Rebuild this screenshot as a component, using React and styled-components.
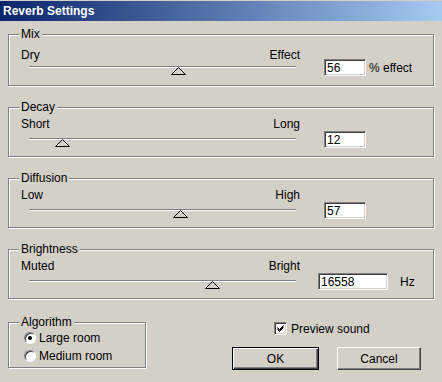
import React from 'react';
import styled, { createGlobalStyle, css } from 'styled-components';

const GlobalStyle = createGlobalStyle`
  body {
    margin: 0;
    background: #d4d0c8;
  }
`;

const groups = [
  { title: 'Mix', left: 'Dry', right: 'Effect', value: '56', pos: 55.8, unit: '% effect', unitGap: 3, padTop: 13, trackGap: 4, padBottom: 9 },
  { title: 'Decay', left: 'Short', right: 'Long', value: '12', pos: 12.4 },
  { title: 'Diffusion', left: 'Low', right: 'High', value: '57', pos: 56.4 },
  { title: 'Brightness', left: 'Muted', right: 'Bright', value: '16558', pos: 68.4, unit: 'Hz', unitGap: 12, inputGap: 18, inputWidth: 70 },
];

const App = () => {
  return (
    <>
      <GlobalStyle />
      <Dialog>
        <TitleBar>Reverb Settings</TitleBar>
        <Body>
          {groups.map(g => (
            <Group
              key={g.title}
              $padTop={g.padTop ?? 9}
              $padBottom={g.padBottom ?? 8}
            >
              <Legend>{g.title}</Legend>
              <SliderCol>
                <Labels>
                  <span>{g.left}</span>
                  <span>{g.right}</span>
                </Labels>
                <Track $gap={g.trackGap ?? 7}>
                  <Thumb style={{ left: `calc(${g.pos}% - 7px)` }} width="15" height="8" viewBox="0 0 15 8">
                    <polygon points="7.5,0.5 0.5,7.5 14.5,7.5" fill="#d4d0c8" stroke="#000" strokeWidth="1" />
                  </Thumb>
                </Track>
              </SliderCol>
              <Field $gap={g.inputGap ?? 24}>
                <TextBox $w={g.inputWidth ?? 42} defaultValue={g.value} />
                {g.unit && <Unit $gap={g.unitGap}>{g.unit}</Unit>}
              </Field>
            </Group>
          ))}
          <Footer>
            <AlgoGroup>
              <Legend>Algorithm</Legend>
              <RadioRow>
                <Radio $checked />
                Large room
              </RadioRow>
              <RadioRow>
                <Radio />
                Medium room
              </RadioRow>
            </AlgoGroup>
            <Actions>
              <CheckRow>
                <CheckBox>
                  <svg width="7" height="7" viewBox="0 0 7 7">
                    <path d="M0.5 2.5 L2.5 4.5 L6.5 0.5 M0.5 3.5 L2.5 5.5 L6.5 1.5 M0.5 4.5 L2.5 6.5 L6.5 2.5" stroke="#000" strokeWidth="1" fill="none" />
                  </svg>
                </CheckBox>
                Preview sound
              </CheckRow>
              <Buttons>
                <Button $w={87} $default>OK</Button>
                <Button $w={84}>Cancel</Button>
              </Buttons>
            </Actions>
          </Footer>
        </Body>
      </Dialog>
    </>
  );
};

export default App;

const Dialog = styled.div`
  width: 442px;
  height: 382px;
  box-sizing: border-box;
  padding-top: 1px;
  overflow: hidden;
  background: #d4d0c8;
  color: #000;
  font-family: "Liberation Sans", Arial, sans-serif;
  font-size: 12px;
`;

const TitleBar = styled.div`
  height: 20px;
  display: flex;
  align-items: center;
  padding-left: 3px;
  background: linear-gradient(to right, #0a246a, #a6caf0);
  color: #fff;
  font-weight: bold;
  font-size: 12px;
`;

const Body = styled.div`
  display: flex;
  flex-direction: column;
  gap: 21px;
  padding: 13px 8px 0 8px;
`;

const etched = css`
  position: relative;
  box-sizing: border-box;
  border: 1px solid #808080;
  box-shadow: 1px 1px 0 #fff, inset 1px 1px 0 #fff;
`;

const Group = styled.div`
  ${etched}
  width: 426px;
  display: flex;
  align-items: flex-end;
  padding: ${p => p.$padTop}px 0 ${p => p.$padBottom}px 12px;
`;

const Legend = styled.span`
  position: absolute;
  top: -8px;
  left: 10px;
  padding: 0 2px;
  line-height: 14px;
  background: #d4d0c8;
`;

const SliderCol = styled.div`
  width: 279px;
  display: flex;
  flex-direction: column;
`;

const Labels = styled.div`
  display: flex;
  justify-content: space-between;
  height: 14px;
  line-height: 14px;
`;

const Track = styled.div`
  position: relative;
  height: 10px;
  margin: ${p => p.$gap}px 4px 0 8px;
  box-sizing: border-box;
  border-top: 1px solid #808080;

  &::before {
    content: '';
    position: absolute;
    left: 0;
    right: 0;
    top: 0;
    height: 1px;
    background: #fff;
  }
`;

const Thumb = styled.svg`
  position: absolute;
  top: 0;
  display: block;
`;

const Field = styled.div`
  display: flex;
  align-items: center;
  margin-left: ${p => p.$gap}px;
`;

const sunken = css`
  border: 1px solid;
  border-color: #808080 #fff #fff #808080;
  box-shadow: inset 1px 1px 0 #404040, inset -1px -1px 0 #d4d0c8;
`;

const TextBox = styled.input`
  ${sunken}
  width: ${p => p.$w}px;
  height: 17px;
  box-sizing: border-box;
  padding: 0 0 0 2px;
  margin: 0;
  background: #fff;
  font-family: "Liberation Sans", Arial, sans-serif;
  font-size: 12px;
  color: #000;
  outline: none;
`;

const Unit = styled.span`
  margin-left: ${p => p.$gap}px;
`;

const Footer = styled.div`
  display: flex;
  align-items: flex-start;
  margin-top: 2px;
`;

const AlgoGroup = styled.div`
  ${etched}
  width: 138px;
  padding: 6px 0 2px 15px;
`;

const RadioRow = styled.div`
  display: flex;
  align-items: center;
  gap: 3px;
  height: 18px;
`;

const Radio = styled.span`
  position: relative;
  width: 12px;
  height: 12px;
  box-sizing: border-box;
  border-radius: 50%;
  background: #fff;
  border: 1px solid;
  border-color: #808080 #fff #fff #808080;
  box-shadow: inset 1px 1px 0 #404040;

  ${p => p.$checked && css`
    &::after {
      content: '';
      position: absolute;
      left: 3px;
      top: 3px;
      width: 4px;
      height: 4px;
      border-radius: 50%;
      background: #000;
    }
  `}
`;

const Actions = styled.div`
  display: flex;
  flex-direction: column;
  margin-left: 86px;
`;

const CheckRow = styled.div`
  display: flex;
  align-items: center;
  gap: 4px;
  height: 13px;
  padding-left: 42px;
`;

const CheckBox = styled.span`
  ${sunken}
  width: 13px;
  height: 13px;
  box-sizing: border-box;
  background: #fff;
  display: flex;
  align-items: center;
  justify-content: center;
`;

const Buttons = styled.div`
  display: flex;
  gap: 18px;
  margin-top: 12px;
`;

const Button = styled.button`
  width: ${p => p.$w}px;
  height: 23px;
  padding: 0;
  background: #d4d0c8;
  color: #000;
  font-family: "Liberation Sans", Arial, sans-serif;
  font-size: 12px;
  border: 1px solid;
  border-color: #fff #404040 #404040 #fff;
  box-shadow: inset -1px -1px 0 #808080;

  ${p => p.$default && css`
    border-color: #000;
    box-shadow: inset 1px 1px 0 #fff, inset -1px -1px 0 #404040, inset -2px -2px 0 #808080;
  `}
`;
